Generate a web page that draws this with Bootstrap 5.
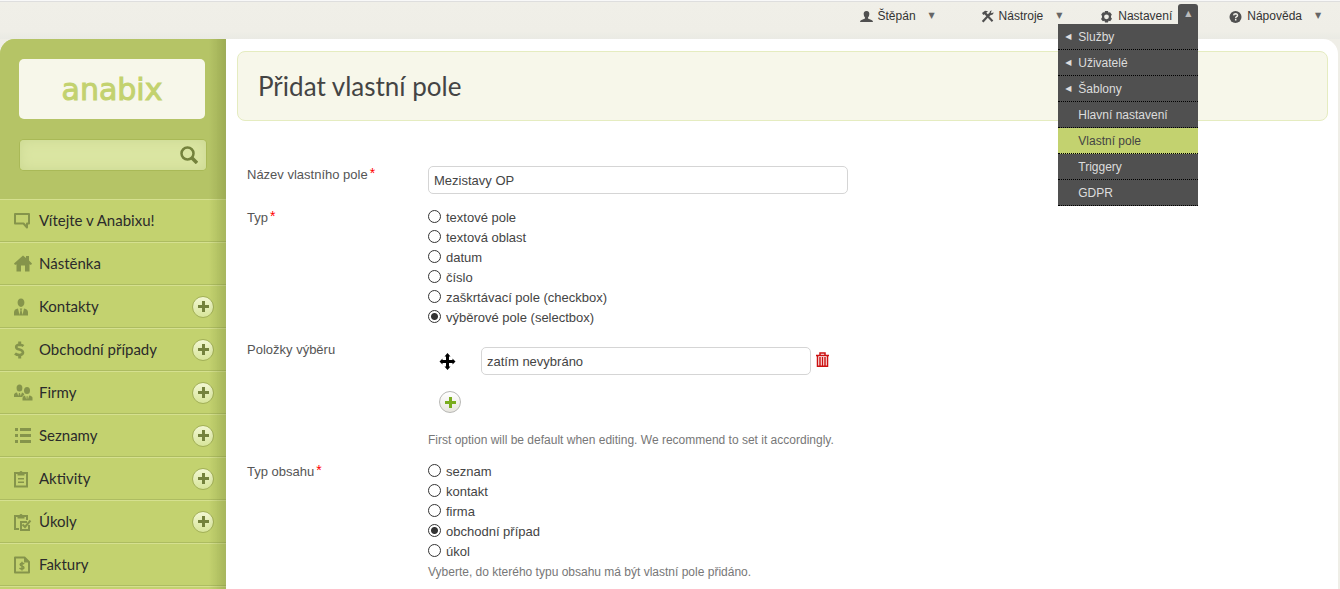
<!DOCTYPE html>
<html lang="cs">
<head>
<meta charset="utf-8">
<meta name="viewport" content="width=device-width, initial-scale=1">
<title>Anabix – Přidat vlastní pole</title>
<link href="https://cdn.jsdelivr.net/npm/bootstrap@5.3.0/dist/css/bootstrap.min.css" rel="stylesheet">
<style>
:root { --lime:#c3d26f; --olive:#b5c466; --icon:#85944b; --dark:#505050; }
body { background:#efeee7; color:#444; font:13px/20px "Liberation Sans", Arial, sans-serif; }
a { color:inherit; text-decoration:none; }
.topbar { height:39px; border-top:1px solid #f8f8f8; background:linear-gradient(#dedede 1px, #f0efe8 1px, #efeee7 30px, #eaeae4); padding-right:12px; font-size:12px; }
.top-nav { gap:31px; }
.top-item { height:30px; color:#333; }
.top-item svg { width:13px; height:13px; margin-right:5px; fill:#505050; }
.caret { width:20px; margin-left:6px; font:8px/20px "DejaVu Sans", sans-serif; color:#666; text-align:center; padding:0; border:0; background:none; }
.caret.is-open { background:var(--dark); color:#bbb; border-radius:3px 3px 0 0; height:20px; margin-top:3px; }
.submenu { top:23px; right:0; width:140px; background:var(--dark); z-index:5; }
.submenu a { display:flex; height:26px; line-height:26px; border-bottom:1px dotted #000; color:#ddd; }
.submenu a::before { content:""; width:20px; text-align:center; font:8px/25px "DejaVu Sans", sans-serif; }
.submenu a.has-more::before { content:"◀"; }
.submenu a.current { background:var(--lime); color:#444; }
.shell { min-height:calc(100vh - 39px); margin-right:2px; }
.sidebar { width:226px; background:var(--lime); border-radius:15px 0 0 0; overflow:hidden; }
.sidebar::after { content:""; position:absolute; inset:0 0 0 auto; width:17px; background:linear-gradient(90deg, transparent, rgba(110,125,50,.32)); pointer-events:none; border-right:1px solid rgba(110,120,70,.3); }
.side-head { background:var(--olive); padding:20px 20px 29px 19px; }
.logo { height:60px; margin-right:1px; background:#f7f7ea; border-radius:5px; color:var(--lime); font:30px/62px "DejaVu Sans", sans-serif; -webkit-text-stroke:1px var(--lime); }
.search { margin:21px 0 0 1px; height:30px; background:#dae5a2; border-radius:4px; box-shadow:inset 0 0 12px #cbd892, 0 0 0 1px #a9b957; }
.search input { min-width:0; background:none; border:0; outline:0; padding:0 8px; }
.search button, .plain-btn { border:0; background:none; padding:0; line-height:0; }
.side-item { height:43px; padding:0 12px 0 13px; border-top:1px solid #d5e08f; border-bottom:1px solid #adbc61; color:#2b2b2b; font:15px/41px Lato, "Open Sans", sans-serif; }
.side-item svg.glyph { width:20px; height:20px; margin-right:6px; fill:var(--icon); color:var(--icon); flex:none; }
.side-rest { border-top:1px solid #d5e08f; }
.add-btn { width:22px; height:22px; border-radius:50%; background:linear-gradient(#f2f7d2,#d8e59b); border:1px solid #a2b057; padding:0; line-height:0; color:#74823c; display:flex; align-items:center; justify-content:center; }
.add-btn.on-white { background:linear-gradient(#fff,#e8e6df); border-color:#b8b8b5; color:#7aad1e; margin:16px 0 0 11px; }
.content-pane { background:#fff; border-radius:0 15px 0 0; padding:12px 10px 10px 11px; }
.title-box { height:70px; background:#f7f7ea; border:1px solid #e5ecc0; border-radius:8px; padding-left:20px; margin-bottom:44px; }
.title-box h1 { margin:0; color:#444; font:26px/68px Lato, "Open Sans", sans-serif; }
.form-line { padding-left:10px; margin-bottom:12px; display:grid; grid-template-columns:181px minmax(0,1fr); }
.form-line.name-line { margin-bottom:14px; }
.name-line .field { margin-top:1px; }
.form-line > .lbl { color:#555; line-height:20px; }
.star { color:#f00; font-size:14px; line-height:0; vertical-align:1px; margin-left:2px; }
.field { height:28px; border:1px solid #d5d5d5; border-radius:5px; padding:0 5px; color:#444; width:100%; outline:0; }
.w-name { max-width:420px; }
.w-option { max-width:330px; }
.opt { display:flex; height:20px; align-items:flex-start; line-height:20px; }
.opt input { appearance:none; width:13px; height:13px; border:1px solid #333; border-radius:50%; margin:2px 5px 0 0; background:#fff; flex:none; }
.opt input:checked { background:radial-gradient(circle, #333 3px, #fff 4px); }
.note { font-size:12px; color:#777; }
.option-box { padding-top:7px; }
.option-note { margin-top:17px; }
.drag-btn { margin:0 25px 0 11px; }
</style>
</head>
<body>
<svg class="d-none">
 <symbol id="plus" viewBox="0 0 11 11"><path d="M4 0h3v4h4v3H7v4H4V7H0V4h4z" fill="currentColor"/></symbol>
</svg>
<header class="topbar">
 <nav class="top-nav d-flex justify-content-end">
  <a href="#" class="top-item d-flex align-items-center me-2"><svg viewBox="0 0 13 13"><path d="M6.500 1C4.300 1 3.500 2.400 3.700 4.200 3.900 6 4.600 7 5 7.600v1L1.500 10Q0 10.500 0 12h13q0-1.500-1.500-2L8 8.600v-1C8.400 7 9.100 6 9.300 4.200 9.500 2.400 8.700 1 6.500 1z"/></svg>Štěpán<span class="caret">▼</span></a>
  <a href="#" class="top-item d-flex align-items-center"><svg viewBox="0 0 13 13"><path d="M1 3L4 .8 7 1.300 5.300 2.700l1.500 1.500 1.700-1.500Q8.500.5 11 .5L9.800 2.300l.9.900 1.800-1Q12.500 5 9.900 4.900L8.300 6.200l4 4.400-1.500 1.500-4-4.300L2.500 12.500.8 10.900 5.300 6.200 3.500 4.200 2.300 5z"/></svg>Nástroje<span class="caret">▼</span></a>
  <div class="position-relative d-flex">
   <a href="#" class="top-item d-flex align-items-center"><svg viewBox="0 0 13 13"><path fill-rule="evenodd" d="M5 1h3l.4 1.600 1.600-.4 1.800 2.300L11 6v1.500l1 1.300-1.800 2.400-1.700-.5L8 12.500H5l-.5-1.700-1.700.4L1 8.900l1-1.300V6L1.200 4.500 3 2.200l1.600.4zM6.500 4.400a2.400 2.400 0 100 4.800 2.400 2.400 0 000-4.800z"/></svg>Nastavení</a>
   <button class="caret is-open align-self-start" aria-label="Zavřít nabídku" aria-expanded="true">▲</button>
   <div class="submenu position-absolute">
    <a href="#" class="has-more">Služby</a><a href="#" class="has-more">Uživatelé</a><a href="#" class="has-more">Šablony</a><a href="#">Hlavní nastavení</a><a href="#" class="current">Vlastní pole</a><a href="#">Triggery</a><a href="#">GDPR</a>
   </div>
  </div>
  <a href="#" class="top-item d-flex align-items-center"><svg viewBox="0 0 13 13"><circle cx="6.500" cy="7" r="6"/><path d="M4.600 5.300Q4.800 3.800 6.600 3.800 8.600 3.900 8.500 5.400 8.400 6.300 7.300 6.900 6.700 7.200 6.700 8.200M6.700 9v1.500" fill="none" stroke="#f0efe8" stroke-width="1.500"/></svg>Nápověda<span class="caret">▼</span></a>
 </nav>
</header>
<div class="shell d-flex">
 <aside class="sidebar d-flex flex-column flex-shrink-0 position-relative">
  <div class="side-head">
   <a href="#" class="logo d-block text-center">anabix</a>
   <form class="search d-flex align-items-center">
    <input type="search" class="flex-grow-1" aria-label="Hledat">
    <button type="button" class="me-2" aria-label="Hledat"><svg width="18" height="18" fill="none" stroke="#74823c"><circle cx="7.500" cy="7.500" r="6" stroke-width="2.500"/><path d="M12 12l5 5" stroke-width="3.500"/></svg></button>
   </form>
  </div>
  <a href="#" class="side-item d-flex align-items-center"><svg class="glyph" viewBox="0 0 20 20"><path d="M2 3h14v9.500h-2v4L10.500 12.500H2z" fill="none" stroke="currentColor" stroke-width="2" stroke-linejoin="round"/></svg>Vítejte v Anabixu!</a>
  <a href="#" class="side-item d-flex align-items-center"><svg class="glyph" viewBox="0 0 20 20"><path d="M10 1.500l3 2.500V2h3v4.500l3 3-1 1.500-1.500-.8V17.500H12v-6H8v6H3.500v-7.300L2 11 1 9.500z"/></svg>Nástěnka</a>
  <div class="side-item d-flex align-items-center"><svg class="glyph" viewBox="0 0 20 20"><path d="M8 1.500C5.800 1.500 4.600 3.200 4.600 5.500S6 10 8 10s3.400-2.200 3.400-4.500S10.200 1.500 8 1.500zM1 18.500v-3Q1 12 5 11.500L6.500 18l1-5-.8-1.500h2.600L8.500 13l1 5L11 11.500q4 .5 4 4v3z"/></svg><a href="#" class="flex-grow-1">Kontakty</a><button class="add-btn" aria-label="Přidat kontakt"><svg width="11" height="11"><use href="#plus"/></svg></button></div>
  <div class="side-item d-flex align-items-center"><svg class="glyph" viewBox="0 0 20 20"><path d="M10.500 6Q9 4.700 6.500 4.700 3.200 4.800 3.200 7 3.200 8.800 6.500 9.600 10 10.500 10 12.700 9.800 15 6.500 15 3.500 15 2 13.500" fill="none" stroke="currentColor" stroke-width="2.600"/><path d="M5.200 1.500h3v3h-3zM5.200 15h3v3.500h-3z"/></svg><a href="#" class="flex-grow-1">Obchodní případy</a><button class="add-btn" aria-label="Přidat obchodní případ"><svg width="11" height="11"><use href="#plus"/></svg></button></div>
  <div class="side-item d-flex align-items-center"><svg class="glyph" viewBox="0 0 20 20"><ellipse cx="6.500" cy="5" rx="2.900" ry="3.500"/><path d="M1 14v-2q0-2 3-2.500L5.300 13 6 10h1l.7 3L9 9.500q2 .2 2.300 2.500-1.800.7-2 2z"/><ellipse cx="14" cy="7.500" rx="3" ry="3.500"/><path d="M9.500 17.500V15q0-2 2.500-2.500l1.300 4 .4-3.500h.8l.4 3.500 1.300-4q3.300.5 3.300 2.500v2.500z"/></svg><a href="#" class="flex-grow-1">Firmy</a><button class="add-btn" aria-label="Přidat firmu"><svg width="11" height="11"><use href="#plus"/></svg></button></div>
  <div class="side-item d-flex align-items-center"><svg class="glyph" viewBox="0 0 20 20"><path d="M2 2h3v3H2zM2 8h3v3H2zM2 14h3v3H2zM7 2h11v3H7zM7 8h11v3H7zM7 14h11v3H7z"/></svg><a href="#" class="flex-grow-1">Seznamy</a><button class="add-btn" aria-label="Přidat seznam"><svg width="11" height="11"><use href="#plus"/></svg></button></div>
  <div class="side-item d-flex align-items-center"><svg class="glyph" viewBox="0 0 20 20"><path d="M2 4h12v13.500H2z" fill="none" stroke="currentColor" stroke-width="2"/><path d="M4.500 3h2a1.600 1.600 0 013 0h2v3.500h-7zM5 9h6v1.500H5zM5 12.500h6V14H5z"/></svg><a href="#" class="flex-grow-1">Aktivity</a><button class="add-btn" aria-label="Přidat aktivitu"><svg width="11" height="11"><use href="#plus"/></svg></button></div>
  <div class="side-item d-flex align-items-center"><svg class="glyph" viewBox="0 0 20 20"><path d="M6 17H2V4h12v4M16 13v5H8v-8h6" fill="none" stroke="currentColor" stroke-width="2"/><path d="M4.500 3h2a1.600 1.600 0 013 0h2v3.500h-7z"/><path d="M9.500 12.500l2.500 2.500L17.500 8.500" fill="none" stroke="currentColor" stroke-width="2"/></svg><a href="#" class="flex-grow-1">Úkoly</a><button class="add-btn" aria-label="Přidat úkol"><svg width="11" height="11"><use href="#plus"/></svg></button></div>
  <a href="#" class="side-item d-flex align-items-center"><svg class="glyph" viewBox="0 0 20 20"><path d="M2 2.500h9.500L16 7v10.500H2z" fill="none" stroke="currentColor" stroke-width="2" stroke-linejoin="round"/><path d="M11 2v5.500h6z"/><path d="M11.200 9Q10.500 8.200 9 8.200 7.200 8.300 7.200 9.600 7.300 10.500 9 10.900 11 11.400 11 12.900 10.800 14 9 14 7.500 14 6.500 13M9 6.800v8.700" fill="none" stroke="currentColor" stroke-width="1.500"/></svg>Faktury</a>
  <div class="side-rest flex-grow-1"></div>
 </aside>
 <main class="content-pane flex-grow-1">
  <div class="title-box"><h1>Přidat vlastní pole</h1></div>
  <form>
   <div class="form-line name-line">
    <label class="lbl" for="fieldName">Název vlastního pole<span class="star">*</span></label>
    <input id="fieldName" class="field w-name" type="text" value="Mezistavy OP">
   </div>
   <div class="form-line" role="radiogroup" aria-labelledby="typeLbl">
    <span class="lbl" id="typeLbl">Typ<span class="star">*</span></span>
    <div>
     <label class="opt"><input type="radio" name="type">textové pole</label>
     <label class="opt"><input type="radio" name="type">textová oblast</label>
     <label class="opt"><input type="radio" name="type">datum</label>
     <label class="opt"><input type="radio" name="type">číslo</label>
     <label class="opt"><input type="radio" name="type">zaškrtávací pole (checkbox)</label>
     <label class="opt"><input type="radio" name="type" checked>výběrové pole (selectbox)</label>
    </div>
   </div>
   <div class="form-line">
    <label class="lbl" for="option1">Položky výběru</label>
    <div class="option-box">
     <div class="d-flex align-items-center">
      <button type="button" class="plain-btn drag-btn" aria-label="Přesunout"><svg width="17" height="17" viewBox="0 0 17 17"><path d="M8.500 0l3 3.500H10V7h3.500V5.500l3 3-3 3V10H10v3.500h1.500l-3 3.500-3-3.500H7V10H3.500v1.500l-3-3 3-3V7H7V3.500H5.500z"/></svg></button>
      <input id="option1" class="field w-option" type="text" value="zatím nevybráno">
      <button type="button" class="plain-btn ms-1 mb-1" aria-label="Smazat"><svg width="15" height="15" viewBox="0 0 15 15" fill="none" stroke="#c11"><path d="M1 3.500h13M5 3V1h5v2" stroke-width="1.500"/><path d="M2.500 4v10.300h10V4M5 5v9M7.500 5v9M10 5v9" stroke-width="1.500"/></svg></button>
     </div>
     <button type="button" class="add-btn on-white" aria-label="Přidat položku"><svg width="11" height="11"><use href="#plus"/></svg></button>
     <div class="note option-note">First option will be default when editing. We recommend to set it accordingly.</div>
    </div>
   </div>
   <div class="form-line" role="radiogroup" aria-labelledby="contentLbl">
    <span class="lbl" id="contentLbl">Typ obsahu<span class="star">*</span></span>
    <div>
     <label class="opt"><input type="radio" name="content">seznam</label>
     <label class="opt"><input type="radio" name="content">kontakt</label>
     <label class="opt"><input type="radio" name="content">firma</label>
     <label class="opt"><input type="radio" name="content" checked>obchodní případ</label>
     <label class="opt"><input type="radio" name="content">úkol</label>
     <div class="note">Vyberte, do kterého typu obsahu má být vlastní pole přidáno.</div>
    </div>
   </div>
  </form>
 </main>
</div>
<script src="https://cdn.jsdelivr.net/npm/bootstrap@5.3.0/dist/js/bootstrap.bundle.min.js"></script>
</body>
</html>
